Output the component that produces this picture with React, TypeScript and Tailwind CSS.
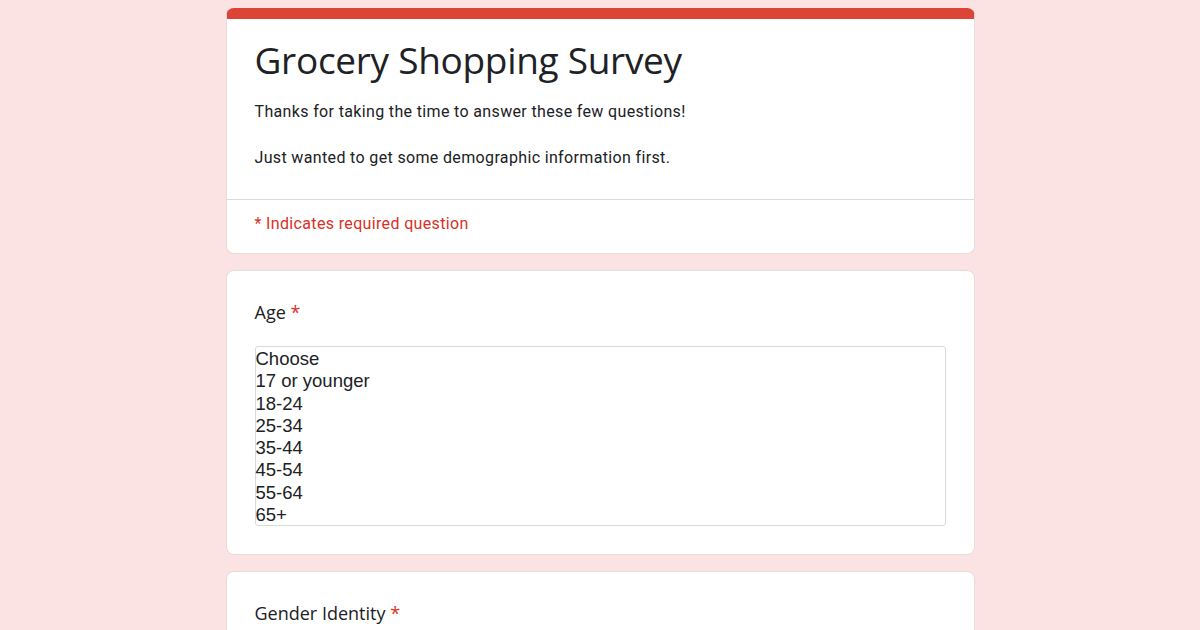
import React from 'react';

export default function App() {
  const options = ['Choose', '17 or younger', '18-24', '25-34', '35-44', '45-54', '55-64', '65+'];

  return (
    <div className="w-[1200px] h-[630px] overflow-hidden bg-[#fae3e2] flex justify-center items-start pt-2 font-['Roboto',sans-serif]">
      <div className="w-[749px] flex flex-col gap-4">
        {/* Encabezado */}
        <div className="shrink-0 bg-white rounded-lg border border-[#e6dcdc] border-t-[11px] border-t-[#db4437] overflow-hidden">
          <div className="px-[28px] pt-[17px] pb-[29px]">
            <h1 className="text-[37px] leading-[48px] text-[#202124] font-['Open_Sans',sans-serif] tracking-[-0.3px]">Grocery Shopping Survey</h1>
            <p className="mt-[16px] text-[16px] leading-[24px] text-[#202124] tracking-[0.35px]">Thanks for taking the time to answer these few questions!</p>
            <p className="mt-[22px] text-[16px] leading-[24px] text-[#202124] tracking-[0.35px]">Just wanted to get some demographic information first.</p>
          </div>
          <div className="border-t border-[#dadce0] px-[28px] pt-[13px] pb-[18px]">
            <p className="text-[16px] leading-[22px] text-[#d93025] tracking-[0.35px]">* Indicates required question</p>
          </div>
        </div>

        {/* Pregunta: edad */}
        <div className="shrink-0 bg-white rounded-lg border border-[#e6dcdc] px-[28px] pt-[28px] pb-[28px]">
          <div className="text-[18px] leading-[26px] text-[#202124] font-['Open_Sans',sans-serif]">
            Age <span className="text-[#d93025]">*</span>
          </div>
          <div className="mt-[21px] border border-[#d9d9d9] rounded-[3px] h-[180px] pt-[1px] font-['Liberation_Sans',sans-serif] text-[18.5px] leading-[22.3px] text-[#202124]">
            {options.map((o) => (
              <div key={o}>{o}</div>
            ))}
          </div>
        </div>

        {/* Pregunta: género */}
        <div className="shrink-0 bg-white rounded-lg border border-[#e6dcdc] px-[28px] pt-[28px] pb-[28px] h-[120px]">
          <div className="text-[18px] leading-[26px] text-[#202124] font-['Open_Sans',sans-serif]">
            Gender Identity <span className="text-[#d93025]">*</span>
          </div>
        </div>
      </div>
    </div>
  );
}
